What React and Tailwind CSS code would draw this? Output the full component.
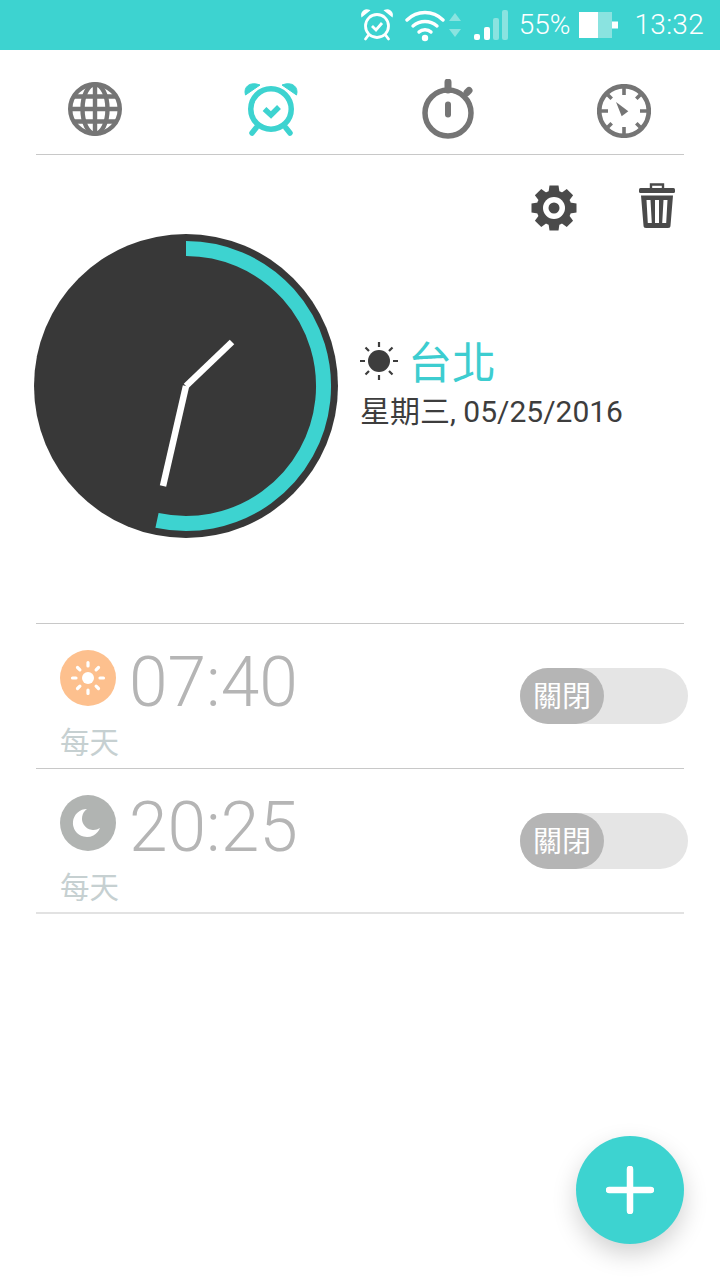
const CJK = '"Roboto","Noto Sans CJK TC",sans-serif';

function StatusBar() {
  return (
    <div className="h-[50px] bg-[#3dd3d0] flex items-center justify-end pr-[16px] text-white" style={{ fontFamily: CJK }}>
      <svg width="36" height="36" viewBox="0 0 36 36" fill="none" stroke="#fff" className="mr-[10px]">
        <circle cx="18" cy="19" r="11.5" strokeWidth="2.8" />
        <path d="M13 19l4 4 6-7" strokeWidth="2.8" />
        <path d="M3 9a5 5 0 0 1 7-5.500zM33 9a5 5 0 0 0-7-5.500z" fill="#fff" strokeWidth="1.6" />
        <path d="M9.5 28l-3 4M26.5 28l3 4" strokeWidth="2.8" strokeLinecap="round" />
      </svg>
      <svg width="40" height="36" viewBox="0 0 40 36" fill="none" stroke="#fff" strokeWidth="3.4" strokeLinecap="round" className="mr-[3px]">
        <path d="M2 13c10-10 26-10 36 0" />
        <path d="M8 19c7-6 17-6 24 0" />
        <path d="M14 25c3-3 9-3 12 0" />
        <circle cx="20" cy="31" r="3.2" fill="#fff" stroke="none" />
      </svg>
      <svg width="14" height="30" viewBox="0 0 14 30" fill="#8ae3e0" className="mr-[11px]">
        <path d="M7 3l6 8H1zM1 19h12l-6 8z" />
      </svg>
      <svg width="36" height="32" viewBox="0 0 36 32" className="mr-[10px]">
        <rect x="1" y="25" width="6" height="6" rx="2" fill="#fff" />
        <rect x="11" y="18" width="6" height="13" rx="2" fill="#fff" />
        <rect x="20" y="9" width="6" height="22" rx="2" fill="#8ae3e0" />
        <rect x="29" y="1" width="6" height="30" rx="2" fill="#8ae3e0" />
      </svg>
      <span className="text-[28px] leading-none font-light mr-[9px]">55%</span>
      <svg width="39" height="26" viewBox="0 0 39 26" className="mr-[16px]">
        <rect x="0" y="0" width="19" height="26" fill="#fff" />
        <rect x="19" y="0" width="14" height="26" fill="#8ae3e0" />
        <rect x="33" y="9.500" width="6" height="7" fill="#fff" />
      </svg>
      <span className="text-[28px] leading-none font-light tracking-[0.3px]">13:32</span>
    </div>
  );
}

function Globe() {
  return (
    <svg width="54" height="54" viewBox="0 0 54 54" fill="none" stroke="#757575" strokeWidth="4.400">
      <circle cx="27" cy="27" r="24.800" />
      <ellipse cx="27" cy="27" rx="12.500" ry="24.800" />
      <path d="M27 2v50M2 27h50M6 14.500h42M6 39.500h42" />
    </svg>
  );
}
function Alarm() {
  return (
    <svg width="54" height="54" viewBox="0 0 54 54" fill="none" stroke="#3dd3d0">
      <circle cx="27" cy="27" r="20.250" strokeWidth="5.500" />
      <path d="M20.500 27l6.500 6 8-8" strokeWidth="5.500" />
      <path d="M1.500 13C-1 5 6 -1 16 3zM52.500 13C55 5 48 -1 38 3z" fill="#3dd3d0" strokeWidth="1" />
      <path d="M12 46l-4 5M42 46l4 5" strokeWidth="5.500" strokeLinecap="round" />
    </svg>
  );
}
function Stopwatch() {
  return (
    <svg width="54" height="60" viewBox="0 0 54 60" fill="none" stroke="#757575" strokeLinecap="round">
      <circle cx="27" cy="34" r="23" strokeWidth="5.500" />
      <path d="M27 3v8" strokeWidth="7" />
      <path d="M46 13.500l2-2" strokeWidth="7" />
      <path d="M27 25.500v10" strokeWidth="6" />
    </svg>
  );
}
function Gauge() {
  return (
    <svg width="54" height="54" viewBox="0 0 54 54" fill="none" stroke="#757575" className="mt-[4px]">
      <circle cx="27" cy="27" r="24.800" strokeWidth="4.600" />
      <path d="M27 4v7M27 43v7M4 27h7M43 27h7M10.700 10.700l4 4M43.300 10.700l-4 4M10.700 43.300l4-4M43.300 43.300l-4-4" strokeWidth="3.600" />
      <path d="M19 18L31.300 27.300 24.700 32.300z" fill="#757575" stroke="none" />
    </svg>
  );
}
function Gear() {
  const teeth = [0, 45, 90, 135, 180, 225, 270, 315];
  return (
    <svg width="46" height="46" viewBox="0 0 46 46" className="mt-[2px]">
      <g fill="#4a4a4a">
        <circle cx="23" cy="23" r="17.500" />
        {teeth.map((a) => (
          <path key={a} d="M18.500 0.500h9l1.200 8h-11.400z" transform={`rotate(${a} 23 23)`} />
        ))}
      </g>
      <circle cx="23" cy="23" r="11" fill="#fff" />
      <circle cx="23" cy="23" r="5.500" fill="#4a4a4a" />
    </svg>
  );
}
function Trash() {
  return (
    <svg width="36" height="46" viewBox="0 0 36 46">
      <path d="M12 5V1.500h12V5" fill="none" stroke="#4a4a4a" strokeWidth="2.400" />
      <rect x="0" y="5" width="36" height="5" rx="1.500" fill="#4a4a4a" />
      <path d="M2 12.500h32l-2.500 30a2.500 2.500 0 0 1-2.500 2.500H7a2.500 2.500 0 0 1-2.500-2.500z" fill="#4a4a4a" />
      <path d="M9.500 17l1.300 23M18 17v23M26.500 17l-1.300 23" stroke="#fff" strokeWidth="4" fill="none" />
    </svg>
  );
}
function Clock() {
  return (
    <svg width="304" height="304" viewBox="0 0 304 304" className="shrink-0">
      <circle cx="152" cy="152" r="152" fill="#383838" />
      <path d="M152 14.500A137.500 137.500 0 1 1 123 286.400" fill="none" stroke="#3dd3d0" strokeWidth="15" />
      <path d="M152 152L198 108" stroke="#fff" strokeWidth="6.500" fill="none" />
      <path d="M152 152L129 252" stroke="#fff" strokeWidth="6.500" fill="none" />
    </svg>
  );
}
function SmallSun() {
  return (
    <svg width="38" height="38" viewBox="0 0 38 38" className="shrink-0">
      <circle cx="19" cy="19" r="11" fill="#3d3d3d" />
      <path d="M19 0v5M19 33v5M0 19h5M33 19h5M5.500 5.500l3.500 3.500M32.500 5.500L29 9M5.500 32.500L9 29M32.500 32.500L29 29" stroke="#3d3d3d" strokeWidth="2.200" />
    </svg>
  );
}
function SunBadge() {
  return (
    <svg width="56" height="56" viewBox="0 0 56 56" className="shrink-0">
      <circle cx="28" cy="28" r="28" fill="#fdc08e" />
      <circle cx="28" cy="28" r="6" fill="#fff" />
      <path d="M28 12.500v3.500M28 40v3.500M12.500 28h3.500M40 28h3.500M17.500 17.500l2.400 2.400M38.500 17.500l-2.400 2.400M17.500 38.500l2.400-2.400M38.500 38.500l-2.400-2.400" stroke="#fff" strokeWidth="3.200" strokeLinecap="round" />
    </svg>
  );
}
function MoonBadge() {
  return (
    <svg width="56" height="56" viewBox="0 0 56 56" className="shrink-0">
      <circle cx="28" cy="28" r="28" fill="#b1b4b2" />
      <path d="M27 14A14 14 0 1 0 40 33 11.500 11.500 0 0 1 27 14z" fill="#fff" />
    </svg>
  );
}

function AlarmRow({ badge, time, last }) {
  return (
    <div className={`h-[145px] mx-[36px] pl-[24px] flex items-start justify-between ${last ? 'border-b-2 border-[#e2e2e2]' : 'border-b border-[#c8c8c8]'}`}>
      <div className="pt-[26px]">
        <div className="flex items-start">
          {badge}
          <span className="text-[69.500px] leading-[56px] font-light text-[#b5b5b5] ml-[13px] mt-[5px]" style={{ fontFamily: CJK }}>{time}</span>
        </div>
        <div className="text-[29.500px] leading-[36px] text-[#c6d0d1] mt-[14px]" style={{ fontFamily: CJK }}>每天</div>
      </div>
      <div className="mt-[44px] -mr-[4px] w-[168px] h-[56px] rounded-full bg-[#e5e5e5]">
        <div className="w-[84px] h-[56px] pt-[3px] rounded-full bg-[#b5b5b5] flex items-center justify-center text-white text-[29px]" style={{ fontFamily: CJK }}>關閉</div>
      </div>
    </div>
  );
}

export default function App() {
  return (
    <div className="relative w-[720px] h-[1280px] bg-white overflow-hidden" style={{ fontFamily: CJK }}>
      <StatusBar />
      <div className="h-[105px] mx-[36px] pl-[32px] pr-[33px] flex items-center justify-between border-b border-[#c8c8c8] pt-[14px]">
        <Globe />
        <Alarm />
        <Stopwatch />
        <Gauge />
      </div>
      <div className="flex justify-end items-start pt-[28px] pr-[45px] h-[79px]">
        <div className="mr-[62px]"><Gear /></div>
        <Trash />
      </div>
      <div className="flex items-start pl-[34px] h-[389px]">
        <Clock />
        <div className="ml-[22px] pt-[97px]">
          <div className="flex items-center">
            <SmallSun />
            <span className="text-[44px] leading-[54px] pt-[6px] text-[#3dcdd0] ml-[10px]">台北</span>
          </div>
          <div className="text-[30px] leading-[36px] text-[#3d3d3d] mt-[3px]">星期三, 05/25/2016</div>
        </div>
      </div>
      <div className="h-px mx-[36px] bg-[#c8c8c8]" />
      <AlarmRow badge={<SunBadge />} time="07:40" />
      <AlarmRow badge={<MoonBadge />} time="20:25" last />
      <button className="absolute left-[576px] top-[1136px] w-[108px] h-[108px] rounded-full bg-[#3dd3d0] shadow-[0_10px_24px_rgba(0,0,0,0.18)] flex items-center justify-center">
        <svg width="48" height="48" viewBox="0 0 48 48" stroke="#fff" strokeWidth="6.500" strokeLinecap="round">
          <path d="M24 3v42M3 24h42" />
        </svg>
      </button>
    </div>
  );
}
